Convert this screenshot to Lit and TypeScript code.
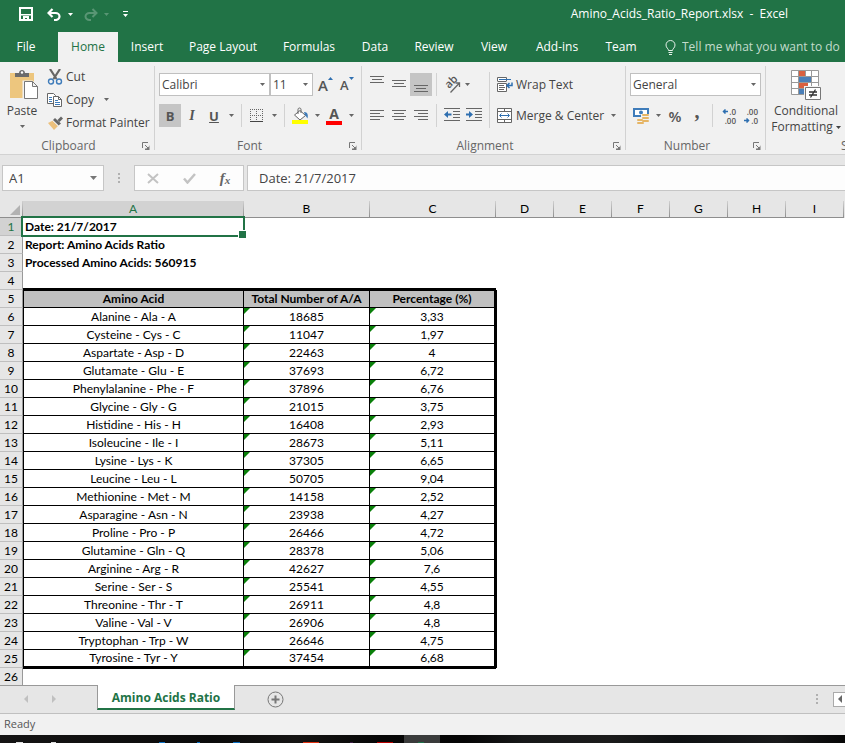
import { LitElement, html, svg, css, nothing, type TemplateResult } from "lit";
import { customElement, property } from "lit/decorators.js";
import { classMap } from "lit/directives/class-map.js";

type Row = [string, string, string];

const ACIDS: Row[] = [
  ["Alanine - Ala - A", "18685", "3,33"],
  ["Cysteine - Cys - C", "11047", "1,97"],
  ["Aspartate - Asp - D", "22463", "4"],
  ["Glutamate - Glu - E", "37693", "6,72"],
  ["Phenylalanine - Phe - F", "37896", "6,76"],
  ["Glycine - Gly - G", "21015", "3,75"],
  ["Histidine - His - H", "16408", "2,93"],
  ["Isoleucine - Ile - I", "28673", "5,11"],
  ["Lysine - Lys - K", "37305", "6,65"],
  ["Leucine - Leu - L", "50705", "9,04"],
  ["Methionine - Met - M", "14158", "2,52"],
  ["Asparagine - Asn - N", "23938", "4,27"],
  ["Proline - Pro - P", "26466", "4,72"],
  ["Glutamine - Gln - Q", "28378", "5,06"],
  ["Arginine - Arg - R", "42627", "7,6"],
  ["Serine - Ser - S", "25541", "4,55"],
  ["Threonine - Thr - T", "26911", "4,8"],
  ["Valine - Val - V", "26906", "4,8"],
  ["Tryptophan - Trp - W", "26646", "4,75"],
  ["Tyrosine - Tyr - Y", "37454", "6,68"],
];

const pic = (w: number, h: number, body: TemplateResult) =>
  html`<svg width=${w} height=${h} viewBox="0 0 ${w} ${h}" aria-hidden="true">${body}</svg>`;

/* ---- small glyphs ---- */
const arrow = pic(5, 3, svg`<path d="M0 0h5L2.5 3z" fill="currentColor"/>`);
const launcher = pic(8, 8, svg`<path d="M.5 6V.5H6M3 3l3.5 3.5" stroke="#777" fill="none"/><path d="M7.500 3v5H3v-1.500h1.500L7 4.500z" fill="#777"/>`);
/* Paragraph lines: [x, y, length] inside a 14x23 cell. */
const lines = (ys: [number, number, number][]) =>
  pic(14, 23, svg`${ys.map(([x, y, l]) => svg`<path d="M${x} ${y + 0.5}h${l}" stroke="#666"/>`)}`);
const vAlign = (y: number) => lines([[0, y, 14], [2, y + 3, 10], [0, y + 6, 14]]);

const icons = {
  save: pic(14, 14, svg`<path d="M1 1h12v12H1z" fill="none" stroke="#fff" stroke-width="2"/><path d="M2 7h10v1.500H2zM4 9h6v4H8v-2H6v2H4z" fill="#fff"/>`),
  undo: pic(15, 13, svg`<path d="M5.500 1L1.500 5l4 4M2 5h6.500a4 3.500 0 0 1 0 7H7" fill="none" stroke="#fff" stroke-width="2.200"/>`),
  redo: pic(15, 13, svg`<path d="M9.500 1l4 4-4 4M13 5H6.500a4 3.500 0 0 0 0 7H8" fill="none" stroke="#fff" stroke-width="2"/>`),
  customise: pic(5, 7, svg`<path d="M0 0h5v1H0zM0 3h5L2.500 6z" fill="#fff"/>`),
  bulb: pic(11, 15, svg`<path d="M3.500 10.500C3.500 8.500 1 8 1 5a4.500 4.500 0 0 1 9 0c0 3-2.500 3.500-2.500 5.500zM3.500 12.500h4M4 14.500h3" fill="none" stroke="#e6f1ea"/>`),
  paste: pic(30, 30, svg`
    <path d="M1 3h24v25H1z" fill="#edc67e"/>
    <path d="M6 7V3h4c0-4 6-4 6 0h4v4z" fill="#6b6b6b"/><circle cx="13" cy="2.500" r="1.200" fill="#fff"/>
    <path d="M15 12h8l6 6v12H15z" fill="#fff" stroke="#f1f1f1" stroke-width="3"/>
    <path d="M15.500 11.500h8l5 5v12h-13zM23.500 11.500v5h5" fill="#fff" stroke="#777"/>`),
  cut: pic(16, 16, svg`<path d="M3 0l6.500 10M13 0L6.500 10" stroke="#666" stroke-width="2.200" fill="none"/>
    <circle cx="4" cy="12.500" r="2.500" fill="none" stroke="#3f7cba" stroke-width="1.400"/><circle cx="12" cy="12.500" r="2.500" fill="none" stroke="#3f7cba" stroke-width="1.400"/>`),
  copy: pic(16, 14, svg`<path d="M.5.500h6l2 2v8h-8z" fill="#fff" stroke="#666"/><path d="M2 4.500h3M2 6.500h3M2 8.500h3" stroke="#3f7cba"/>
    <path d="M6.500 3.500h5l3 3v7h-8z" fill="#fff" stroke="#666"/><path d="M11.500 3.500v3h3" fill="none" stroke="#666"/><path d="M8 7.500h3M8 9.500h5M8 11.500h5" stroke="#3f7cba"/>`),
  brush: pic(17, 14, svg`<path d="M1 7l5-2.500L11 10l-4 4z" fill="#ecc07c"/><path d="M6 4l2-2 6 5.500-2.500 2z" fill="#666"/><path d="M10.500 4L14 .500l2 2L12.500 6z" fill="#666"/><path d="M5.500 4.500l6 5.500" stroke="#f1f1f1"/>`),
  up: pic(5, 3, svg`<path d="M0 3L2.500 0 5 3z" fill="#2f6fb0"/>`),
  down: pic(5, 3, svg`<path d="M0 0h5L2.500 3z" fill="#2f6fb0"/>`),
  borders: pic(14, 14, svg`<path d="M.5 0v12M6.500 0v12M12.500 0v12M0 .5h13M0 6.500h13" stroke="#666" stroke-dasharray="1 1"/><path d="M0 12.500h13" stroke="#444"/>`),
  fill: pic(17, 17, svg`<path d="M8 3.500l5.500 5L8 13 2.500 8z" fill="#fff" stroke="#666"/><path d="M6 7V2.500C6 .500 9 .500 9 2.500V6" fill="none" stroke="#666"/><path d="M12 5c3 0 4.500 2 3.500 6.500L13 8z" fill="#3f7cba"/><path d="M0 13h16v4H0z" fill="#ff0"/>`),
  orient: pic(17, 16, svg`<path d="M6.500 15.500L15 6.500M11.500 6h4v4" fill="none" stroke="#666" stroke-width="1.300"/>
    <text x="5" y="12" transform="rotate(-45 5 12)" font-size="11" font-weight="600" font-family="Open Sans, sans-serif" fill="#555">ab</text>`),
  outdent: pic(16, 15, svg`<path d="M0 .5h16M9 3.500h7M9 6.500h7M9 9.500h7M0 12.500h16" stroke="#666"/><path d="M0 6.500L4 3v2.500h3.500v2H4V10z" fill="#2f6fb0"/>`),
  indent: pic(16, 15, svg`<path d="M0 .5h16M9 3.500h7M9 6.500h7M9 9.500h7M0 12.500h16" stroke="#666"/><path d="M7 6.500L3 3v2.500H0v2h3V10z" fill="#2f6fb0"/>`),
  wrap: pic(16, 16, svg`<path d="M.5 4V.500h9V4M.5 4.500h9M.5 6.500h9v8h-9z" fill="#fff" stroke="#666"/><path d="M2 8.500h5M2 10.500h6M2 12.500h5" stroke="#666"/><path d="M2 2.500h12" stroke="#2f6fb0"/><path d="M15 5.500v3h-5M12.500 6l-2.500 2.500 2.500 2.500" fill="none" stroke="#2f6fb0" stroke-width="1.500"/>`),
  merge: pic(15, 15, svg`<path d="M.5.500h14v14H.500zM.5 3.500h14M.5 11.500h14M7.500.500v3M7.500 11.500v3" fill="#fff" stroke="#666"/><path d="M3 7.500h9M4.500 5.500l-2 2 2 2M10.500 5.500l2 2-2 2" fill="none" stroke="#2f6fb0"/>`),
  money: pic(17, 17, svg`<path d="M0 1h16v9H0z" fill="#3f7cba"/><path d="M2 3h12v5H2z" fill="#fff"/><circle cx="8" cy="5.500" r="2" fill="#3f7cba"/>
    <path d="M8 7h8v10H4v-5h4z" fill="#f1f1f1"/><g fill="#e6b565"><rect x="9" y="7" width="7" height="2" rx="1"/><rect x="9" y="10" width="7" height="2" rx="1"/><rect x="9" y="13" width="7" height="2" rx="1"/><rect x="4" y="12" width="6" height="2" rx="1"/><rect x="4" y="15" width="7" height="2" rx="1"/></g>`),
  conditional: pic(30, 30, svg`<path d="M.5.500h27v24H.500z" fill="#fff"/><path d="M8 1h6v5H8zM8 13h9v5H8z" fill="#d9603f"/><path d="M8 7h12v5H8zM8 19h5v5H8z" fill="#4a7fb8"/>
    <path d="M.5.500h27v24H.500zM7.500.500v24M14.500.500v6M20.500.500v24M.5 6.500h27M.5 12.500h27M.5 18.500h27" fill="none" stroke="#999"/>
    <path d="M13 16h17v14H13z" fill="#f1f1f1"/><path d="M14.500 17.500h15v12h-15z" fill="#fff" stroke="#777"/><path d="M18 22h8M18 25h8M24.500 19.500l-5 8" stroke="#333" fill="none" stroke-width="1.300"/>`),
  cross: pic(12, 11, svg`<path d="M1 1l10 9M11 1L1 10" stroke="#c3c3c3" stroke-width="2"/>`),
  check: pic(13, 11, svg`<path d="M1 5.500L4.500 9.500 12 1" fill="none" stroke="#c3c3c3" stroke-width="2.500"/>`),
  dots: pic(2, 10, svg`<path d="M0 0h2v2H0zM0 4h2v2H0zM0 8h2v2H0z" fill="#b0b0b0"/>`),
  left: pic(4, 8, svg`<path d="M4 0v8L0 4z" fill="currentColor"/>`),
  right: pic(4, 8, svg`<path d="M0 0v8l4-4z" fill="currentColor"/>`),
  plus: pic(17, 17, svg`<circle cx="8.500" cy="8.500" r="7.500" fill="none" stroke="#777"/><path d="M8.500 4.500v8M4.500 8.500h8" stroke="#777" stroke-width="2"/>`),
};

const decimalArrow = (flip: boolean) =>
  flip
    ? pic(6, 5, svg`<path d="M0 2.500h5M2.500.500l2 2-2 2" fill="none" stroke="#2f6fb0" stroke-width="1.500"/>`)
    : pic(6, 5, svg`<path d="M6 2.500H1M3.500.500l-2 2 2 2" fill="none" stroke="#2f6fb0" stroke-width="1.500"/>`);

const base = css`
  * { box-sizing: border-box; }
  svg { display: block; flex: none; }
  button, input, select {
    font: inherit; color: inherit; margin: 0; padding: 0; border: 0;
    background: none; border-radius: 0; outline: none; appearance: none;
  }
  button { display: flex; align-items: center; justify-content: center; white-space: nowrap; }
`;

@customElement("ribbon-group")
class RibbonGroup extends LitElement {
  @property() caption = "";
  @property({ type: Boolean }) last = false;

  static styles = [base, css`
    :host { display: flex; flex-direction: column; flex: none; height: 92px;
      background: linear-gradient(#d2d2d2, #d2d2d2) right 4px / 1px 84px no-repeat; }
    :host([last]) { flex: 1 1 0; min-width: 0; overflow: hidden; background: none; }
    .body { flex: 1; display: flex; }
    .caption { display: flex; height: 16px; color: #666; line-height: 16px; }
    .name { flex: 1; text-align: center; white-space: nowrap; }
    .launch { width: 18px; }
    :host([last]) .name { text-align: left; padding-left: 75px; }
  `];

  render() {
    return html`
      <div class="body"><slot></slot></div>
      <div class="caption">
        <span class="name">${this.caption}</span>
        ${this.last ? nothing : html`<button class="launch" aria-label="${this.caption} settings">${launcher}</button>`}
      </div>`;
  }
}

@customElement("excel-ribbon")
class ExcelRibbon extends LitElement {
  static styles = [base, css`
    :host { display: flex; background: #f1f1f1; border-bottom: 1px solid #d2d2d2; color: #444; overflow: hidden; }
    .w-clip { width: 155px; } .w-font { width: 207px; } .w-align { width: 264px; } .w-num { width: 140px; }
    .big { flex-direction: column; justify-content: flex-start; width: 44px; padding-top: 8px; line-height: 16px; }
    .big svg + span { margin-top: 3px; }
    .big span + svg { margin-top: 6px; color: #666; }
    .big .pasteicon { padding-left: 3px; margin-bottom: 3px; }
    .wide { width: 72px; margin-left: 4px; }
    .tail { display: flex; align-items: center; gap: 3px; color: #444; }
    .list { display: flex; flex-direction: column; padding: 3px 0 0 3px; }
    .item { height: 23px; justify-content: flex-start; gap: 3px; }
    .item .ic { width: 16px; }
    .item .more { margin-left: 7px; color: #666; }
    .rows { display: flex; flex-direction: column; gap: 8px; padding: 11px 0 0 4px; }
    .row { display: flex; height: 23px; }
    .b { width: 22px; height: 23px; color: #555; }
    .on { background: #c5c5c5; }
    .dd { width: 12px; color: #666; }
    .thin { width: 8px; }
    .sep { width: 9px; background: linear-gradient(#d2d2d2, #d2d2d2) center / 1px 100% no-repeat; }
    .tall { height: 56px; margin-top: 10px; }
    .pick { position: relative; display: flex; height: 23px; }
    .pick select { width: 100%; padding-left: 2px; border: 1px solid #c0c0c0; background: #fff; color: #444; }
    .pick svg { position: absolute; right: 5px; top: 10px; color: #666; pointer-events: none; }
    .p-font { width: 111px; } .p-size { width: 43px; } .p-num { width: 131px; }
    .bold { font-weight: 700; font-size: 13px; }
    .ital { font: italic 700 14px "Liberation Serif", serif; }
    .under { text-decoration: underline; }
    .size { justify-content: flex-start; align-items: flex-start; padding-left: 5px; font-weight: 600; line-height: 24px; }
    .size svg { margin-top: 4px; }
    .big-a { font-size: 15px; } .small-a { font-size: 13px; }
    .fontcolor { flex-direction: column; font-weight: 700; font-size: 14px; line-height: 14px; }
    .fontcolor i { width: 16px; height: 4px; background: #f00; }
    .pct { font-size: 15px; font-weight: 600; }
    .comma { font: 700 20px/12px "Liberation Serif", serif; padding-bottom: 10px; }
    .dec { flex-direction: column; font-size: 8px; line-height: 9px; font-weight: 600; align-items: stretch; padding: 0 3px; }
    .dec span { display: flex; align-items: center; justify-content: flex-end; gap: 1px; height: 9px; }
    .orient svg { overflow: visible; }
    .label { justify-content: flex-start; gap: 3px; padding-left: 3px; }
    .label .ic { width: 16px; }
    .right .row { width: 127px; }
    .right { padding-left: 0; }
    .end { margin-left: auto; margin-right: 2px; }
  `];

  private b(label: string, body: unknown, extra = "") {
    return html`<button class="b ${extra}" aria-label=${label}>${body}</button>`;
  }
  private dd(label: string, extra = "") {
    return html`<button class="dd ${extra}" aria-label="${label} options">${arrow}</button>`;
  }
  private pick(label: string, value: string, cls: string) {
    return html`<div class="pick ${cls}"><select aria-label=${label}><option>${value}</option></select>${arrow}</div>`;
  }

  render() {
    const sep = html`<span class="sep"></span>`;
    return html`
      <ribbon-group class="w-clip" caption="Clipboard">
        <button class="big"><span class="pasteicon">${icons.paste}</span><span>Paste</span>${arrow}</button>
        <div class="list">
          <button class="item"><span class="ic">${icons.cut}</span>Cut</button>
          <button class="item"><span class="ic">${icons.copy}</span>Copy<span class="more">${arrow}</span></button>
          <button class="item"><span class="ic">${icons.brush}</span>Format Painter</button>
        </div>
      </ribbon-group>

      <ribbon-group class="w-font" caption="Font">
        <div class="rows">
          <div class="row">
            ${this.pick("Font name", "Calibri", "p-font")}${this.pick("Font size", "11", "p-size")}
            ${this.b("Increase font size", html`A${icons.up}`, "size big-a")}
            ${this.b("Decrease font size", html`A${icons.down}`, "size small-a")}
          </div>
          <div class="row">
            ${this.b("Bold", "B", "bold on")}${this.b("Italic", "I", "ital")}${this.b("Underline", "U", "under bold")}${this.dd("Underline")}
            ${sep}${this.b("Borders", icons.borders)}${this.dd("Borders")}
            ${sep}${this.b("Fill colour", icons.fill)}${this.dd("Fill colour")}
            ${this.b("Font colour", html`A<i></i>`, "fontcolor")}${this.dd("Font colour")}
          </div>
        </div>
      </ribbon-group>

      <ribbon-group class="w-align" caption="Alignment">
        <div class="rows">
          <div class="row">
            ${this.b("Top align", vAlign(3))}
            ${this.b("Middle align", vAlign(7))}
            ${this.b("Bottom align", vAlign(12), "on")}
            ${sep}${this.b("Orientation", icons.orient, "orient")}${this.dd("Orientation", "thin")}
          </div>
          <div class="row">
            ${this.b("Align left", lines([[0, 6, 14], [0, 9, 10], [0, 12, 14], [0, 15, 10]]))}
            ${this.b("Centre", lines([[0, 6, 14], [2, 9, 10], [0, 12, 14], [2, 15, 10]]))}
            ${this.b("Align right", lines([[0, 6, 14], [4, 9, 10], [0, 12, 14], [4, 15, 10]]))}
            ${sep}${this.b("Decrease indent", icons.outdent)}${this.b("Increase indent", icons.indent)}
          </div>
        </div>
        <span class="sep tall"></span>
        <div class="rows right">
          <div class="row"><button class="label"><span class="ic">${icons.wrap}</span>Wrap Text</button></div>
          <div class="row"><button class="label"><span class="ic">${icons.merge}</span>Merge &amp; Center</button>${this.dd("Merge", "end")}</div>
        </div>
      </ribbon-group>

      <ribbon-group class="w-num" caption="Number">
        <div class="rows">
          <div class="row">${this.pick("Number format", "General", "p-num")}</div>
          <div class="row">
            ${this.b("Accounting format", icons.money)}${this.dd("Accounting format")}
            ${this.b("Percent style", "%", "pct")}${this.b("Comma style", ",", "comma")}${sep}
            ${this.b("Increase decimal", html`<span>${decimalArrow(false)}.0</span><span>.00</span>`, "dec")}
            ${this.b("Decrease decimal", html`<span>.00</span><span>${decimalArrow(true)}.0</span>`, "dec")}
          </div>
        </div>
      </ribbon-group>

      <ribbon-group last caption="Styles">
        <button class="big wide">${icons.conditional}<span>Conditional</span><span class="tail">Formatting${arrow}</span></button>
      </ribbon-group>`;
  }
}

@customElement("sheet-grid")
class SheetGrid extends LitElement {
  static styles = [base, css`
    :host { display: block; overflow: hidden; background: #fff; color: #000; font: 12px/16px Lato, "Open Sans", sans-serif; }
    table { width: 100%; table-layout: fixed; border-collapse: separate; border-spacing: 0; }
    th, td { padding: 0; height: 18px; line-height: 16px; font-weight: 400; white-space: nowrap; text-align: center; }
    .c-row { width: 23px; } .c-a { width: 221px; } .c-bc { width: 126px; } .c-std { width: 58px; }
    thead th { height: 17px; background: #e6e6e6; border-bottom: 1px solid #999; border-right: 1px solid;
      border-image: linear-gradient(#d4d4d4, #8c8c8c) 1; line-height: 16px; }
    .corner svg { margin: 2px 2px 0 auto; }
    thead .edge { border-right: 0; }
    tbody th { background: #e6e6e6; border-right: 1px solid #999; border-bottom: 1px solid #bfbfbf; }
    thead .sel, tbody .sel { background: #d2d2d2; color: #217346; }
    tbody tr:last-child > * { height: 17px; border-bottom: 0; }
    .note { position: relative; padding-left: 2px; text-align: left; font-weight: 700; }
    .cursor { position: absolute; inset: -2px -1px -1px -2px; border: 2px solid #217346; }
    .cursor::after { content: ""; position: absolute; right: -4px; bottom: -4px; width: 7px; height: 7px; background: #217346; border: 1px solid #fff; }
    .d { border-right: 1px solid #000; border-bottom: 1px solid #000; }
    .d:nth-child(2) { border-left: 1px solid #000; }
    .d:nth-child(4) { border-right-width: 2px; }
    .h { background: #c0c0c0; font-weight: 700; border-top: 1px solid #000; }
    .n { position: relative; }
    .n::before { content: ""; position: absolute; left: 0; top: 0; border-top: 6px solid #0a800a; border-right: 6px solid transparent; }
    .foot .d { border-bottom-width: 2px; }
    .over { border-bottom: 2px solid #000; }
    .under { border-top: 1px solid #000; }
    .beside { border-left: 1px solid #000; }
  `];

  render() {
    const notes = ["Date: 21/7/2017", "Report: Amino Acids Ratio", "Processed Amino Acids: 560915"];
    return html`
      <table>
        <colgroup>
          <col class="c-row"><col class="c-a"><col class="c-bc"><col class="c-bc">
          ${[..."DEFGHI"].map(() => html`<col class="c-std">`)}<col>
        </colgroup>
        <thead><tr>
          <th class="corner">${pic(10, 10, svg`<path d="M10 0v10H0z" fill="#b2b2b2"/>`)}</th>
          ${[..."ABCDEFGHI"].map((c) => html`<th scope="col" class=${classMap({ sel: c === "A" })}>${c}</th>`)}
          <th class="edge"></th>
        </tr></thead>
        <tbody>
          ${notes.map((t, i) => html`<tr>
            <th scope="row" class=${classMap({ sel: i === 0 })}>${i + 1}</th>
            <td class="note">${t}${i === 0 ? html`<span class="cursor"></span>` : nothing}</td><td colspan="9"></td></tr>`)}
          <tr><th scope="row">4</th><td class="over" colspan="3"></td><td colspan="7"></td></tr>
          <tr><th scope="row">5</th><td class="d h">Amino Acid</td><td class="d h">Total Number of A/A</td><td class="d h">Percentage (%)</td><td class="beside" colspan="7"></td></tr>
          ${ACIDS.map(([name, total, pct], i) => html`<tr class=${classMap({ foot: i === ACIDS.length - 1 })}>
            <th scope="row">${i + 6}</th><td class="d">${name}</td><td class="d n">${total}</td><td class="d n">${pct}</td><td class="beside" colspan="7"></td></tr>`)}
          <tr><th scope="row">26</th><td class="under" colspan="3"></td><td colspan="7"></td></tr>
        </tbody>
      </table>`;
  }
}

@customElement("app-root")
class AppRoot extends LitElement {
  static styles = [base, css`
    :host { display: flex; flex-direction: column; min-height: 100vh; overflow: hidden; background: #000;
      font: 12px/16px "Open Sans", "Noto Sans", sans-serif; color: #444; }
    header { background: #217346; color: #fff; }
    .title { display: flex; align-items: center; height: 32px; padding: 0 57px 4px 19px; }
    .quick { display: flex; align-items: center; }
    .q-undo { margin-left: 14px; gap: 6px; color: #fff; }
    .q-redo { margin-left: 10px; gap: 6px; color: #fff; opacity: .25; }
    .q-more { margin-left: 14px; }
    .doc { margin-left: auto; white-space: pre; }
    nav { display: grid; grid-template-columns: 58px 60px 58px 94px 78px 54px 64px 56px 70px 58px 1fr; height: 30px; }
    nav a { display: flex; align-items: center; justify-content: center; color: #fff; text-decoration: none; }
    nav .home { background: #f1f1f1; color: #217346; }
    nav .file { padding-right: 6px; }
    .tell { display: flex; align-items: center; gap: 6px; padding-left: 15px; min-width: 0; }
    .tell input { flex: 1; min-width: 0; }
    .tell input::placeholder { color: #c3dccd; opacity: 1; }
    .formula { display: flex; padding: 10px 0 10px 2px; background: #e6e6e6; font-size: 13px; }
    .box { display: flex; align-items: center; height: 26px; border: 1px solid #c6c6c6; background: #fdfdfd; }
    .name { width: 102px; padding: 0 6px; }
    .name input { flex: 1; min-width: 0; }
    .name svg { color: #777; }
    .grip { display: flex; align-items: center; justify-content: center; width: 30px; }
    .acts { width: 110px; }
    .acts button { flex: 1; height: 24px; }
    .fx { font: italic 700 15px "Liberation Serif", serif; color: #666; }
    .fx small { font-size: 11px; padding-top: 3px; }
    .entry { flex: 1; margin-left: 3px; border-right: 0; padding-left: 11px; }
    .entry input { flex: 1; min-width: 0; }
    .tabs { display: flex; height: 29px; background: #e6e6e6; border-top: 1px solid #999; border-bottom: 1px solid #c0c0c0; color: #c0c0c0; }
    .step { width: 28px; height: 26px; }
    .steps { display: flex; width: 97px; padding-left: 12px; }
    .sheet { width: 138px; height: 25px; margin-top: -1px; padding-top: 3px; background: #fff; border: 1px solid #999; border-width: 0 1px 2px; border-bottom-color: #217346;
      color: #217346; font-weight: 700; }
    .add { width: 81px; height: 26px; }
    .scroll { display: flex; align-items: center; gap: 15px; margin-left: auto; height: 26px; }
    .back { width: 12px; height: 15px; border: 1px solid #aaa; border-right: 0; background: #fff; color: #666; justify-content: flex-end; padding-right: 3px; }
    .status { height: 21px; padding: 2px 4px; background: #f1f1f1; line-height: 16px; font-size: 11px; color: #555; }
    .task { flex: 1; min-height: 8px; overflow: hidden; background: linear-gradient(90deg, #151414, #0a0a0a 25%, #151413 35%, #060606 45%, #050505 55%, #171819 62%, #1b1b1b 72%, #0e1012 80%, #191a1b 92%, #060606); }
  `];

  render() {
    const tabs = ["Insert", "Page Layout", "Formulas", "Data", "Review", "View", "Add-ins", "Team"];
    return html`
      <header>
        <div class="title">
          <div class="quick">
            <button aria-label="Save">${icons.save}</button>
            <button class="q-undo" aria-label="Undo">${icons.undo}${arrow}</button>
            <button class="q-redo" aria-label="Redo">${icons.redo}${arrow}</button>
            <button class="q-more" aria-label="Customise toolbar">${icons.customise}</button>
          </div>
          <span class="doc">Amino_Acids_Ratio_Report.xlsx  -  Excel</span>
        </div>
        <nav>
          <a class="file" href="#file">File</a>
          <a class="home" href="#home">Home</a>
          ${tabs.map((t) => html`<a href="#${t}">${t}</a>`)}
          <label class="tell">${icons.bulb}<input aria-label="Tell me" placeholder="Tell me what you want to do"></label>
        </nav>
      </header>
      <excel-ribbon></excel-ribbon>
      <div class="formula">
        <div class="box name"><input aria-label="Name box" .value=${"A1"}>${pic(7, 4, svg`<path d="M0 0h7L3.500 4z" fill="currentColor"/>`)}</div>
        <span class="grip">${icons.dots}</span>
        <div class="box acts">
          <button aria-label="Cancel">${icons.cross}</button>
          <button aria-label="Enter">${icons.check}</button>
          <button class="fx" aria-label="Insert function">f<small>x</small></button>
        </div>
        <div class="box entry"><input aria-label="Formula bar" .value=${"Date: 21/7/2017"}></div>
      </div>
      <sheet-grid></sheet-grid>
      <div class="tabs">
        <div class="steps">
          <button class="step" aria-label="Previous sheet">${icons.left}</button>
          <button class="step" aria-label="Next sheet">${icons.right}</button>
        </div>
        <button class="sheet">Amino Acids Ratio</button>
        <button class="add" aria-label="New sheet">${icons.plus}</button>
        <div class="scroll">${icons.dots}<button class="back" aria-label="Scroll left">${icons.left}</button></div>
      </div>
      <div class="status">Ready</div>
      <div class="task">${pic(845, 8, svg`
        <path d="M404 0h36v8h-36z" fill="#3a3b3b"/>
        <path d="M16 7h7v1h-7zM51 7h5v1h-5z" fill="#ddd"/>
        <path d="M159 7h6v1h-6zM197 7h3v1h-3zM233 7h7v1h-7z" fill="#0a6fc2"/>
        <path d="M303 7h16v1h-16z" fill="#e0300f"/><path d="M350 7h3v1h-3z" fill="#3a1a44"/>
        <path d="M377 7h16v1h-16z" fill="#b80000"/><path d="M418 7h6v1h-6z" fill="#1e7048"/>`)}</div>`;
  }
}
